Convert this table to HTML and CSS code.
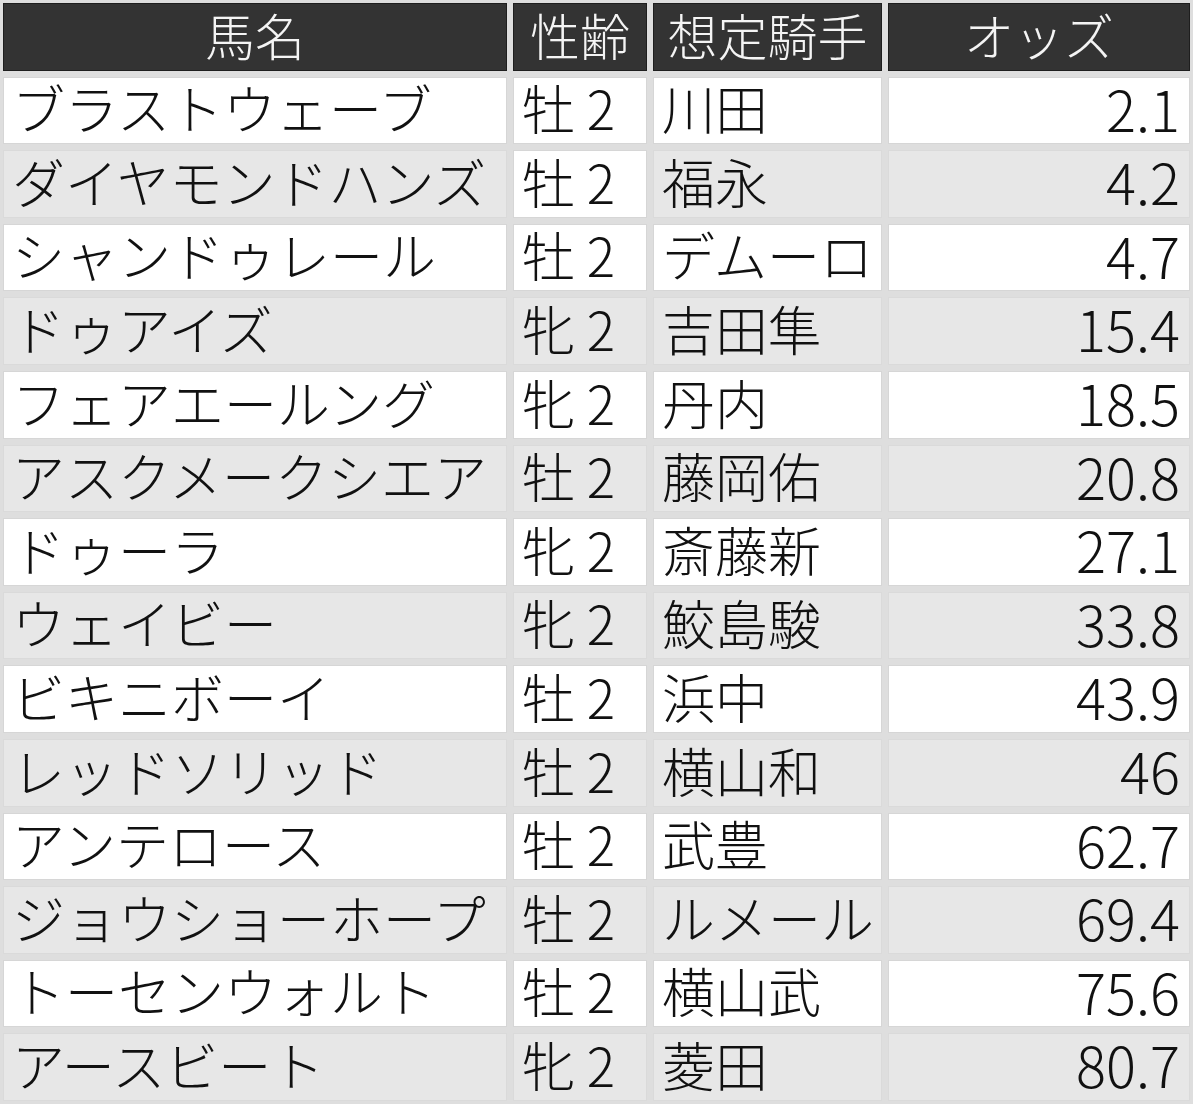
FILE: index.html
```html
<!DOCTYPE html>
<html lang="ja">
<head>
<meta charset="utf-8">
<title>想定オッズ</title>
<link rel="stylesheet" href="styles.css">
</head>
<body>
<div class="odds-table">
  <div class="row head">
    <div class="cell c-name">馬名</div>
    <div class="cell c-sex">性齢</div>
    <div class="cell c-jockey">想定騎手</div>
    <div class="cell c-odds">オッズ</div>
  </div>
  <div class="row">
    <div class="cell c-name">ブラストウェーブ</div><div class="cell c-sex">牡 2</div><div class="cell c-jockey">川田</div><div class="cell c-odds">2.1</div>
  </div>
  <div class="row alt">
    <div class="cell c-name">ダイヤモンドハンズ</div><div class="cell c-sex white">牡 2</div><div class="cell c-jockey">福永</div><div class="cell c-odds">4.2</div>
  </div>
  <div class="row">
    <div class="cell c-name">シャンドゥレール</div><div class="cell c-sex">牡 2</div><div class="cell c-jockey">デムーロ</div><div class="cell c-odds">4.7</div>
  </div>
  <div class="row alt">
    <div class="cell c-name">ドゥアイズ</div><div class="cell c-sex">牝 2</div><div class="cell c-jockey">吉田隼</div><div class="cell c-odds">15.4</div>
  </div>
  <div class="row">
    <div class="cell c-name">フェアエールング</div><div class="cell c-sex">牝 2</div><div class="cell c-jockey">丹内</div><div class="cell c-odds">18.5</div>
  </div>
  <div class="row alt">
    <div class="cell c-name">アスクメークシエア</div><div class="cell c-sex">牡 2</div><div class="cell c-jockey">藤岡佑</div><div class="cell c-odds">20.8</div>
  </div>
  <div class="row">
    <div class="cell c-name">ドゥーラ</div><div class="cell c-sex">牝 2</div><div class="cell c-jockey">斎藤新</div><div class="cell c-odds">27.1</div>
  </div>
  <div class="row alt">
    <div class="cell c-name">ウェイビー</div><div class="cell c-sex">牝 2</div><div class="cell c-jockey">鮫島駿</div><div class="cell c-odds">33.8</div>
  </div>
  <div class="row">
    <div class="cell c-name">ビキニボーイ</div><div class="cell c-sex">牡 2</div><div class="cell c-jockey">浜中</div><div class="cell c-odds">43.9</div>
  </div>
  <div class="row alt">
    <div class="cell c-name">レッドソリッド</div><div class="cell c-sex">牡 2</div><div class="cell c-jockey">横山和</div><div class="cell c-odds">46</div>
  </div>
  <div class="row">
    <div class="cell c-name">アンテロース</div><div class="cell c-sex">牡 2</div><div class="cell c-jockey">武豊</div><div class="cell c-odds">62.7</div>
  </div>
  <div class="row alt">
    <div class="cell c-name">ジョウショーホープ</div><div class="cell c-sex">牡 2</div><div class="cell c-jockey">ルメール</div><div class="cell c-odds">69.4</div>
  </div>
  <div class="row">
    <div class="cell c-name">トーセンウォルト</div><div class="cell c-sex">牡 2</div><div class="cell c-jockey">横山武</div><div class="cell c-odds">75.6</div>
  </div>
  <div class="row alt">
    <div class="cell c-name">アースビート</div><div class="cell c-sex">牝 2</div><div class="cell c-jockey">菱田</div><div class="cell c-odds">80.7</div>
  </div>
</div>
</body>
</html>
```
FILE: styles.css
```css
html, body {
  margin: 0;
  padding: 0;
  background: #ffffff;
}

body {
  font-family: "Noto Sans CJK JP", "Noto Sans", sans-serif;
  color: #111111;
}

.odds-table {
  display: grid;
  grid-template-columns: 504px 134px 229px 302px;
  grid-auto-rows: 67.6px;
  gap: 6px;
  padding: 3px;
  width: max-content;
  background: #dedede;
}

.row {
  display: contents;
}

.cell {
  display: flex;
  align-items: center;
  box-sizing: border-box;
  background: #ffffff;
  border: 1px solid #d6d6d6;
  font-size: 53px;
  font-weight: 300;
  line-height: 1.1;
  white-space: nowrap;
  padding: 0 8px 6px 8px;
}

.row.alt .cell {
  background: #e7e7e7;
  border-color: #dadada;
}

.row.alt .cell.white {
  background: #ffffff;
  border-color: #d6d6d6;
}

.c-odds {
  justify-content: flex-end;
  padding-right: 9px;
  font-size: 56px;
}

.row.head .cell {
  background: #333333;
  border-color: #1e1e1e;
  color: #f4f4f4;
  font-size: 50px;
  line-height: 1;
  justify-content: center;
  padding: 0 0 5px 0;
}
```
